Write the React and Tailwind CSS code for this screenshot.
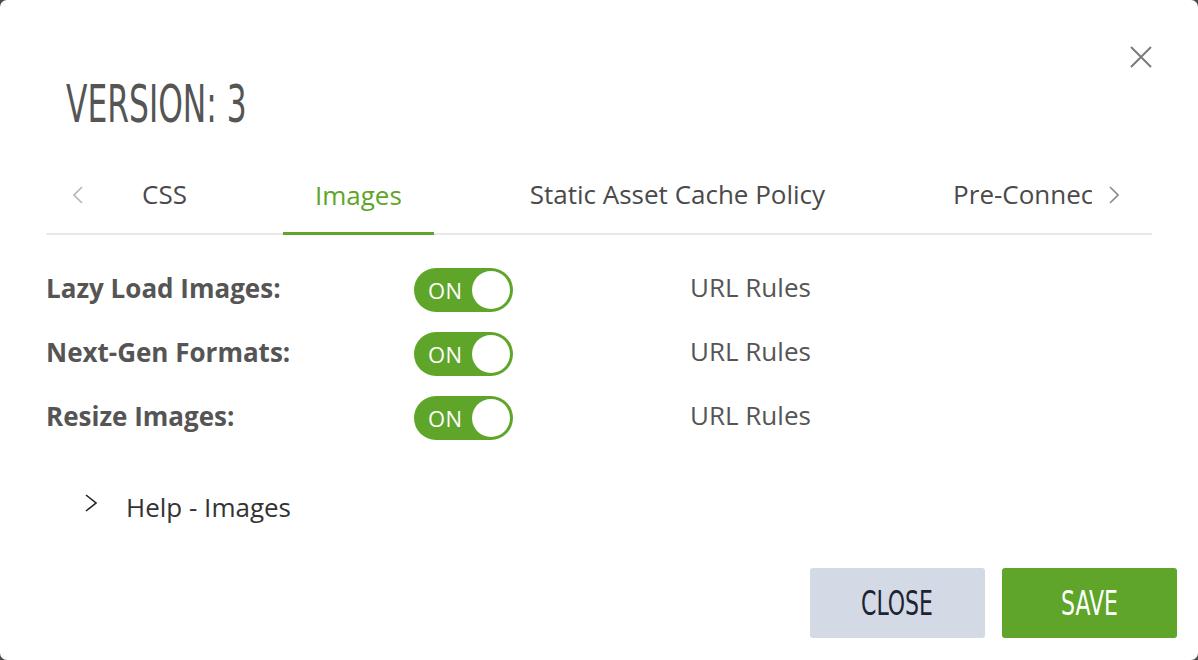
import React from "react";

const OS = { fontFamily: "'Open Sans', 'Liberation Sans', sans-serif" };

function Toggle() {
  return (
    <div className="w-[99px] h-[44px] rounded-full bg-[#5ea52a] flex items-center justify-between pl-[14px] pr-[3px] shrink-0">
      <span className="text-white text-[22px] leading-none tracking-[0.5px]" style={OS}>ON</span>
      <span className="w-[38px] h-[38px] rounded-full bg-white" />
    </div>
  );
}

function Row({ label }) {
  return (
    <div className="flex items-center h-[44px]">
      <div className="w-[368px] text-[26px] font-bold text-[#555] leading-none -mt-[4px]" style={OS}>{label}</div>
      <Toggle />
      <div className="ml-[177px] text-[26px] text-[#555] leading-none -mt-[6px]" style={OS}>URL Rules</div>
    </div>
  );
}

export default function App() {
  const cond = { fontFamily: "'Liberation Sans Narrow', 'DejaVu Sans Condensed', 'Liberation Sans', sans-serif" };
  return (
    <div className="w-[1198px] h-[660px] bg-[#4a4a4a]">
      <div className="w-full h-full bg-white rounded-[7px] flex flex-col relative">
        <button className="absolute right-[46px] top-[46px] w-[22px] h-[22px]" aria-label="close">
          <svg width="22" height="22" viewBox="0 0 22 22" fill="none" stroke="#7a7a7a" strokeWidth="2">
            <path d="M1 1 L21 21 M21 1 L1 21" />
          </svg>
        </button>
        <div className="px-[46px]">
          <div className="pt-[78px] pl-[20px]">
            <h1 className="text-[52px] leading-none text-[#555] font-normal origin-left scale-x-[0.67] whitespace-nowrap" style={cond}>VERSION: 3</h1>
          </div>
          <div className="mt-[27px] flex items-stretch h-[78px] border-b-2 border-[#e8e8e8]">
            <div className="w-[64px] shrink-0 flex items-center justify-center">
              <svg width="10" height="18" viewBox="0 0 10 18" fill="none" stroke="#b5b5b5" strokeWidth="1.6">
                <path d="M9 1 L1 9 L9 17" />
              </svg>
            </div>
            <div className="flex-1 min-w-0 overflow-x-clip flex gap-[64px] whitespace-nowrap text-[26px]" style={OS}>
              <div className="px-[32px] shrink-0 flex items-center text-[#4a4a4a] -mt-[2px]">CSS</div>
              <div className="px-[32px] shrink-0 flex items-center text-[#5ea52a] border-b-[3px] border-[#5ea52a] -mb-[2px] pt-[1px]">Images</div>
              <div className="px-[32px] shrink-0 flex items-center text-[#4a4a4a] -mt-[2px]">Static Asset Cache Policy</div>
              <div className="px-[32px] shrink-0 flex items-center text-[#4a4a4a] -mt-[2px]">Pre-Connect</div>
            </div>
            <div className="w-[60px] shrink-0 flex items-center pl-[17px]">
              <svg width="10" height="18" viewBox="0 0 10 18" fill="none" stroke="#8a8a8a" strokeWidth="1.6">
                <path d="M1 1 L9 9 L1 17" />
              </svg>
            </div>
          </div>
          <div className="mt-[33px] flex flex-col gap-[20px]">
            <Row label="Lazy Load Images:" />
            <Row label="Next-Gen Formats:" />
            <Row label="Resize Images:" />
          </div>
          <div className="mt-[54px] flex items-center pl-[39px]">
            <svg width="12" height="20" viewBox="0 0 12 20" fill="none" stroke="#222" strokeWidth="1.6" className="-mt-[8px]">
              <path d="M1 2 L11 10 L1 18" />
            </svg>
            <span className="ml-[29px] text-[26px] text-[#333] leading-none" style={OS}>Help - Images</span>
          </div>
        </div>
        <div className="mt-auto flex justify-end gap-[17px] pr-[21px] pb-[22px]">
          <button className="w-[175px] h-[70px] rounded-[3px] bg-[#d3dae5] text-[#1c2333] text-[34px] flex items-center justify-center">
            <span className="scale-x-[0.72] inline-block" style={cond}>CLOSE</span>
          </button>
          <button className="w-[175px] h-[70px] rounded-[3px] bg-[#5ea52a] text-white text-[34px] flex items-center justify-center">
            <span className="scale-x-[0.72] inline-block" style={cond}>SAVE</span>
          </button>
        </div>
      </div>
    </div>
  );
}
